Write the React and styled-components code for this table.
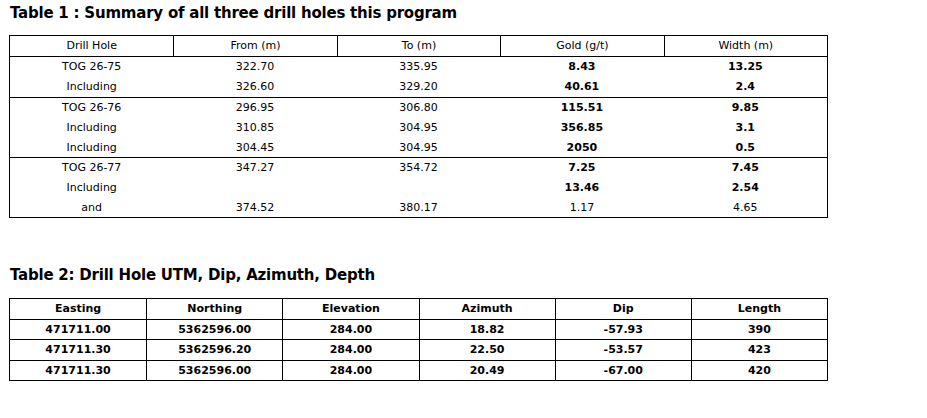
import styled, { createGlobalStyle } from "styled-components";

const GlobalStyle = createGlobalStyle`
  body {
    margin: 0;
    background: #fff;
    font-family: "DejaVu Sans", Verdana, sans-serif;
    color: #000;
  }
`;

const Page = styled.div`
  display: flex;
  flex-direction: column;
  padding: 0 0 0 9px;
`;

const Title = styled.h2`
  margin: ${({ $top }) => $top}px 0 ${({ $bottom }) => $bottom}px 1px;
  font-size: 15px;
  line-height: 22px;
  letter-spacing: -0.22px;
  font-weight: bold;
`;

const Table = styled.div`
  width: 819px;
  box-sizing: border-box;
  border: 1px solid #000;
  font-size: 11px;
`;

const HeadRow = styled.div`
  display: grid;
  grid-template-columns: repeat(5, 1fr);
  border-bottom: 1px solid #000;
`;

const HeadCell = styled.div`
  height: 20px;
  line-height: 20px;
  text-align: center;
  & + & {
    border-left: 1px solid #000;
  }
`;

const Group = styled.div`
  & + & {
    border-top: 1px solid #000;
  }
`;

const Row = styled.div`
  display: grid;
  grid-template-columns: repeat(5, 1fr);
  height: ${({ $short }) => ($short ? 19 : 20)}px;
  line-height: ${({ $short }) => ($short ? 19 : 20)}px;
`;

const Cell = styled.div`
  text-align: center;
  font-weight: ${({ $bold }) => ($bold ? "bold" : "normal")};
`;

const GridRow = styled.div`
  display: grid;
  grid-template-columns: repeat(6, 1fr);
  & + & {
    border-top: 1px solid #000;
  }
`;

const GridCell = styled.div`
  height: 19.5px;
  line-height: 19.5px;
  text-align: center;
  font-weight: bold;
  & + & {
    border-left: 1px solid #000;
  }
`;

const summaryHead = ["Drill Hole", "From (m)", "To (m)", "Gold (g/t)", "Width (m)"];

const summary = [
  [
    ["TOG 26-75", "322.70", "335.95", "8.43", "13.25"],
    ["Including", "326.60", "329.20", "40.61", "2.4"],
  ],
  [
    ["TOG 26-76", "296.95", "306.80", "115.51", "9.85"],
    ["Including", "310.85", "304.95", "356.85", "3.1"],
    ["Including", "304.45", "304.95", "2050", "0.5"],
  ],
  [
    ["TOG 26-77", "347.27", "354.72", "7.25", "7.45"],
    ["Including", "", "", "13.46", "2.54"],
    ["and", "374.52", "380.17", "1.17", "4.65", true],
  ],
];

const utmHead = ["Easting", "Northing", "Elevation", "Azimuth", "Dip", "Length"];

const utm = [
  ["471711.00", "5362596.00", "284.00", "18.82", "-57.93", "390"],
  ["471711.30", "5362596.20", "284.00", "22.50", "-53.57", "423"],
  ["471711.30", "5362596.00", "284.00", "20.49", "-67.00", "420"],
];

export default function App() {
  return (
    <>
      <GlobalStyle />
      <Page>
        <Title $top={2} $bottom={11}>
          Table 1 : Summary of all three drill holes this program
        </Title>
        <Table>
          <HeadRow>
            {summaryHead.map((h) => (
              <HeadCell key={h}>{h}</HeadCell>
            ))}
          </HeadRow>
          {summary.map((group, gi) => (
            <Group key={gi}>
              {group.map((r, ri) => {
                const plain = r[5];
                // the last line of a three-line group sits one pixel tighter
                const short = group.length === 3 && ri === 2;
                return (
                  <Row key={ri} $short={short}>
                    {r.slice(0, 5).map((v, ci) => (
                      <Cell key={ci} $bold={!plain && ci >= 3}>
                        {v}
                      </Cell>
                    ))}
                  </Row>
                );
              })}
            </Group>
          ))}
        </Table>

        <Title $top={46} $bottom={12}>
          Table 2: Drill Hole UTM, Dip, Azimuth, Depth
        </Title>
        <Table>
          <GridRow>
            {utmHead.map((h) => (
              <GridCell key={h}>{h}</GridCell>
            ))}
          </GridRow>
          {utm.map((r, ri) => (
            <GridRow key={ri}>
              {r.map((v, ci) => (
                <GridCell key={ci}>{v}</GridCell>
              ))}
            </GridRow>
          ))}
        </Table>
      </Page>
    </>
  );
}
